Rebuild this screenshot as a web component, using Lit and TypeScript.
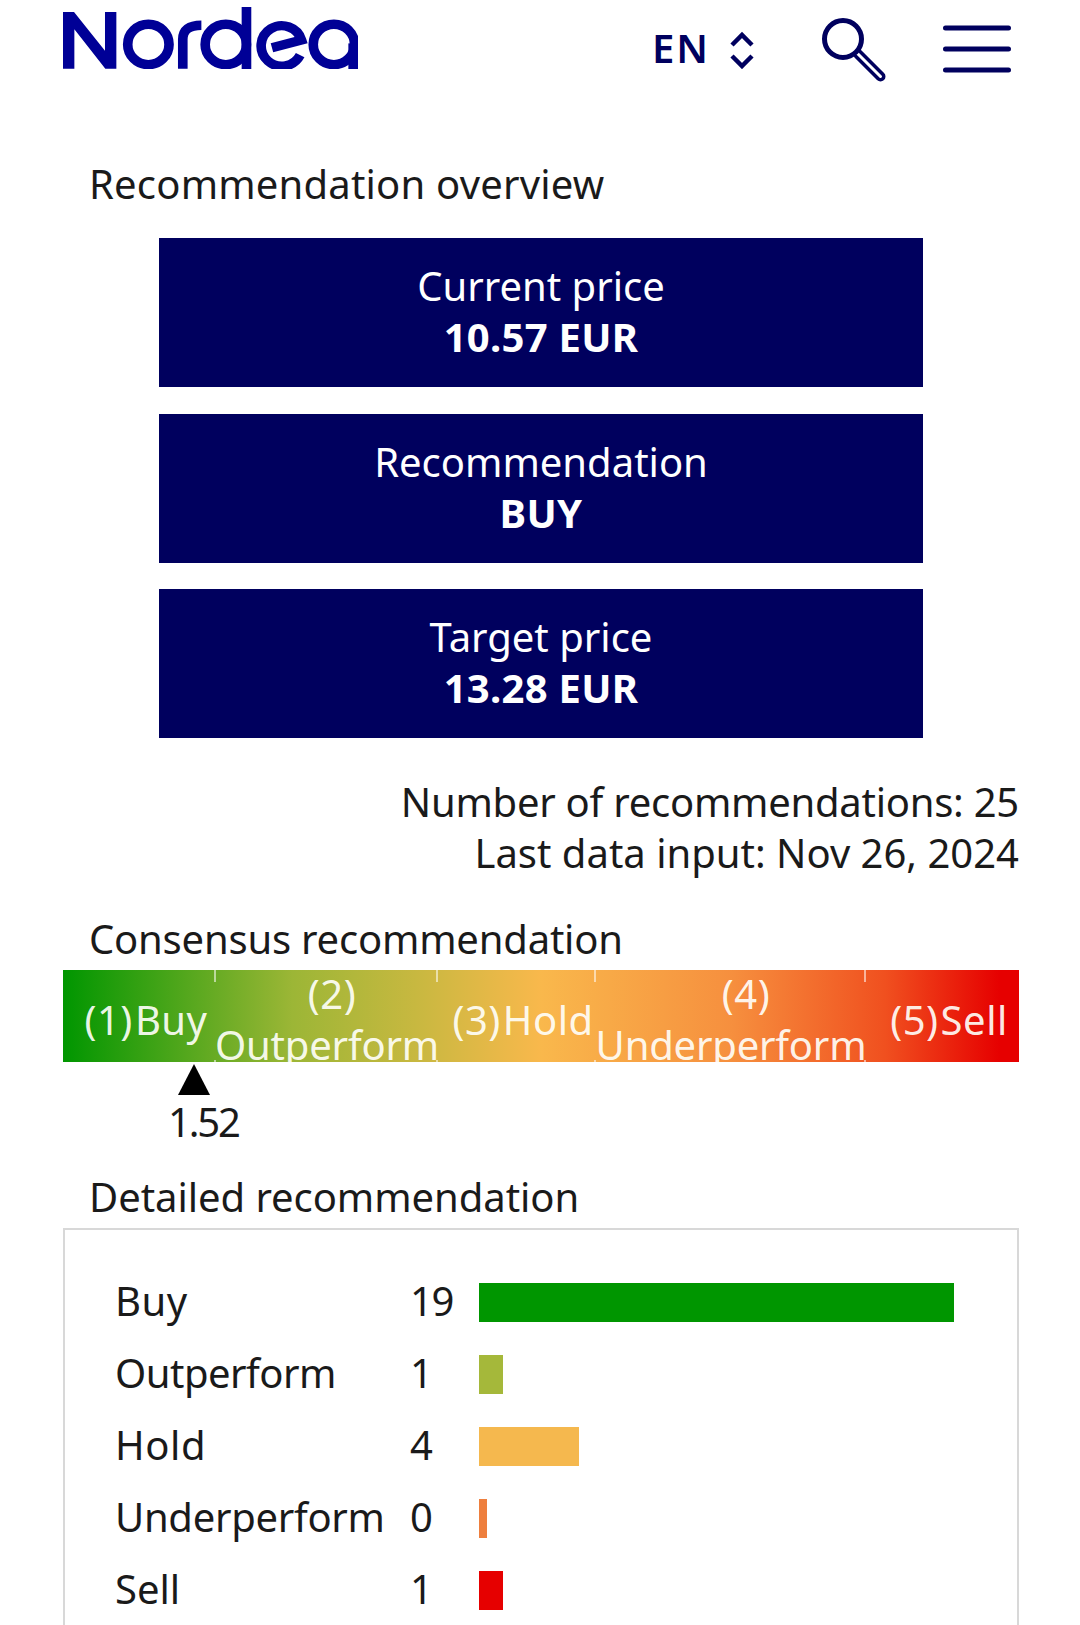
import { LitElement, html, css } from "lit";
import { customElement } from "lit/decorators.js";

const ROWS = [
  { label: "Buy", n: 19, w: 475, color: "#009600", ls: 0.5 },
  { label: "Outperform", n: 1, w: 24, color: "#a5b83a", ls: -0.5 },
  { label: "Hold", n: 4, w: 100, color: "#f5b84e", ls: 0.6 },
  { label: "Underperform", n: 0, w: 8, color: "#ee7f3e", ls: -0.3 },
  { label: "Sell", n: 1, w: 24, color: "#e60000", ls: 0 },
];

@customElement("app-root")
export class AppRoot extends LitElement {
  static styles = css`
    :host { display: block; width: 1080px; height: 1625px; overflow: hidden; background: #fff; color: #1a1a1a;
      font-family: "Noto Sans", sans-serif; font-size: 40px; line-height: 51px; }
    * { box-sizing: border-box; }
    .page { padding: 0 61px 0 63px; }
    header { height: 158px; display: flex; align-items: flex-start; }
    .logo { display: block; width: 295px; height: 62px; margin-top: 7px; }
    .logo * { fill: none; stroke: #000096; stroke-width: 28; }
    .logo .solid { fill: #000096; stroke: none; }
    .tools { margin-left: auto; display: flex; align-items: flex-start; margin-right: 8px; }
    .lang { margin-top: 22px; width: 52px; font-size: 40px; font-weight: 600; color: #00005e; line-height: 52px; letter-spacing: 2px; }
    .ic { display: block; fill: none; stroke: #00005e; stroke-linecap: round; stroke-linejoin: round; }
    .chev { width: 24px; height: 38px; margin: 31px 0 0 26px; stroke-width: 4.5; stroke-linecap: butt; stroke-linejoin: miter; }
    .search { width: 66px; height: 66px; margin: 16px 0 0 66px; stroke-width: 5; }
    .search .handle { stroke-width: 3.5; }
    .menu { width: 68px; height: 52px; margin: 24px 0 0 57px; stroke-width: 5; }
    h2 { margin: 0; font: inherit; padding-left: 26px; }
    .overview { letter-spacing: 0.2px; }
    .cards { display: flex; flex-direction: column; gap: 27px; margin: 29px 96px 0 96px; }
    .cards .card + .card + .card { margin-top: -1px; }
    .card { height: 149px; padding-top: 22px; background: #00005e; color: #fff; text-align: center; }
    .card b { display: block; font-weight: 700; letter-spacing: 0.3px; }
    .meta { margin-top: 38px; text-align: right; }
    .tight { letter-spacing: -0.25px; }
    .consensus { margin-top: 35px; letter-spacing: -0.2px; }
    .scale { height: 92px; margin-top: 6px; overflow: hidden; display: grid;
      grid-template-columns: 152px 222px 158px 270px 154px;
      background: linear-gradient(90deg, #009600 0%, #9cb636 24%, #c8b840 37%, #f9b84c 50%, #f68f3e 70%, #f0501f 86%, #e60000 98%);
      color: rgba(255, 255, 250, 0.93); }
    .cell { position: relative; height: 92px; }
    .txt { height: 102px; margin-top: -2px; display: flex; flex-direction: column; justify-content: center; align-items: center; white-space: nowrap; text-align: center; letter-spacing: 0.5px; }
    .num { padding-left: 14px; margin-right: 2px; }
    .wide { padding-left: 32px; margin-right: 0; }
    .word { padding-left: 2px; letter-spacing: -0.2px; }
    .cell:not(:last-child)::before, .cell:not(:last-child)::after { content: ""; position: absolute; right: -1px; width: 2px; background: rgba(255, 255, 255, 0.55); }
    .cell:not(:last-child)::before { top: 0; height: 12px; }
    .cell:not(:last-child)::after { bottom: 0; height: 2px; }
    .tri { display: block; width: 32px; height: 31px; margin: 2px 0 0 115px; fill: #000; }
    .val { margin: 1px 0 0 105px; letter-spacing: -2.2px; }
    .detailed { margin-top: 24px; letter-spacing: -0.05px; }
    .box { margin-top: 6px; border: 2px solid #d8d8d8; height: 500px; padding: 36.500px 0 0 50px; display: grid;
      grid-template-columns: 295px 68px 1fr; grid-auto-rows: 72px; align-items: center; align-content: start; }
    .lab { padding-bottom: 4px; }
    .cnt { padding-bottom: 4px; letter-spacing: -1.5px; }
    .bar { height: 39px; margin-left: 1px; }
  `;

  render() {
    return html`<div class="page">
      <header>
        <svg class="logo" viewBox="183 22 857 184" preserveAspectRatio="none" role="img" aria-label="Nordea">
          <path class="solid" d="M183 205V37H215L305 152V37H338V205H306L216 88V205Z"></path>
          <circle cx="431" cy="133" r="60"></circle>
          <path d="M531 205V118Q531 76 585 76"></path>
          <circle cx="656" cy="133" r="60"></circle>
          <rect class="solid" x="702" y="22" width="28" height="184"></rect>
          <path d="M790 143L876 120A60 60 0 1 0 872 165"></path>
          <circle cx="970" cy="133" r="60"></circle>
          <rect class="solid" x="1012" y="130" width="28" height="76"></rect>
        </svg>
        <div class="tools">
          <div class="lang">EN</div>
          <svg class="ic chev" viewBox="0 0 24 38"><path d="M2 14L12 4L22 14M2 25L12 35L22 25"></path></svg>
          <svg class="ic search" viewBox="0 0 66 66">
            <circle cx="23" cy="23" r="18.500"></circle>
            <path class="handle" d="M40.300 35.700L62.800 58.200A3.200 3.200 0 0 1 58.200 62.800L35.700 40.300"></path>
          </svg>
          <svg class="ic menu" viewBox="0 0 68 52"><path d="M2.500 4H65.500M2.500 25H65.500M2.500 46H65.500"></path></svg>
        </div>
      </header>
      <h2 class="overview">Recommendation overview</h2>
      <div class="cards">
        <div class="card">Current price<b>10.57 EUR</b></div>
        <div class="card">Recommendation<b>BUY</b></div>
        <div class="card">Target price<b>13.28 EUR</b></div>
      </div>
      <div class="meta"><span class="tight">Number of recommendations: 25</span><br />Last data input: Nov 26, 2024</div>
      <h2 class="consensus">Consensus recommendation</h2>
      <div class="scale">
        <div class="cell"><div class="txt"><span><span class="num">(1)</span>Buy</span></div></div>
        <div class="cell"><div class="txt"><span class="num">(2)</span><span class="word">Outperform</span></div></div>
        <div class="cell"><div class="txt"><span><span class="num">(3)</span>Hold</span></div></div>
        <div class="cell"><div class="txt"><span class="num wide">(4)</span><span class="word">Underperform</span></div></div>
        <div class="cell"><div class="txt"><span><span class="num">(5)</span>Sell</span></div></div>
      </div>
      <svg class="tri" viewBox="0 0 32 31"><path d="M16 0L32 31H0Z"></path></svg>
      <div class="val">1.52</div>
      <h2 class="detailed">Detailed recommendation</h2>
      <div class="box">
        ${ROWS.map(
          (r) => html`<div class="lab" style="letter-spacing:${r.ls}px">${r.label}</div><div class="cnt">${r.n}</div>
            <div class="bar" style="width:${r.w}px;background:${r.color}"></div>`
        )}
      </div>
    </div>`;
  }
}
